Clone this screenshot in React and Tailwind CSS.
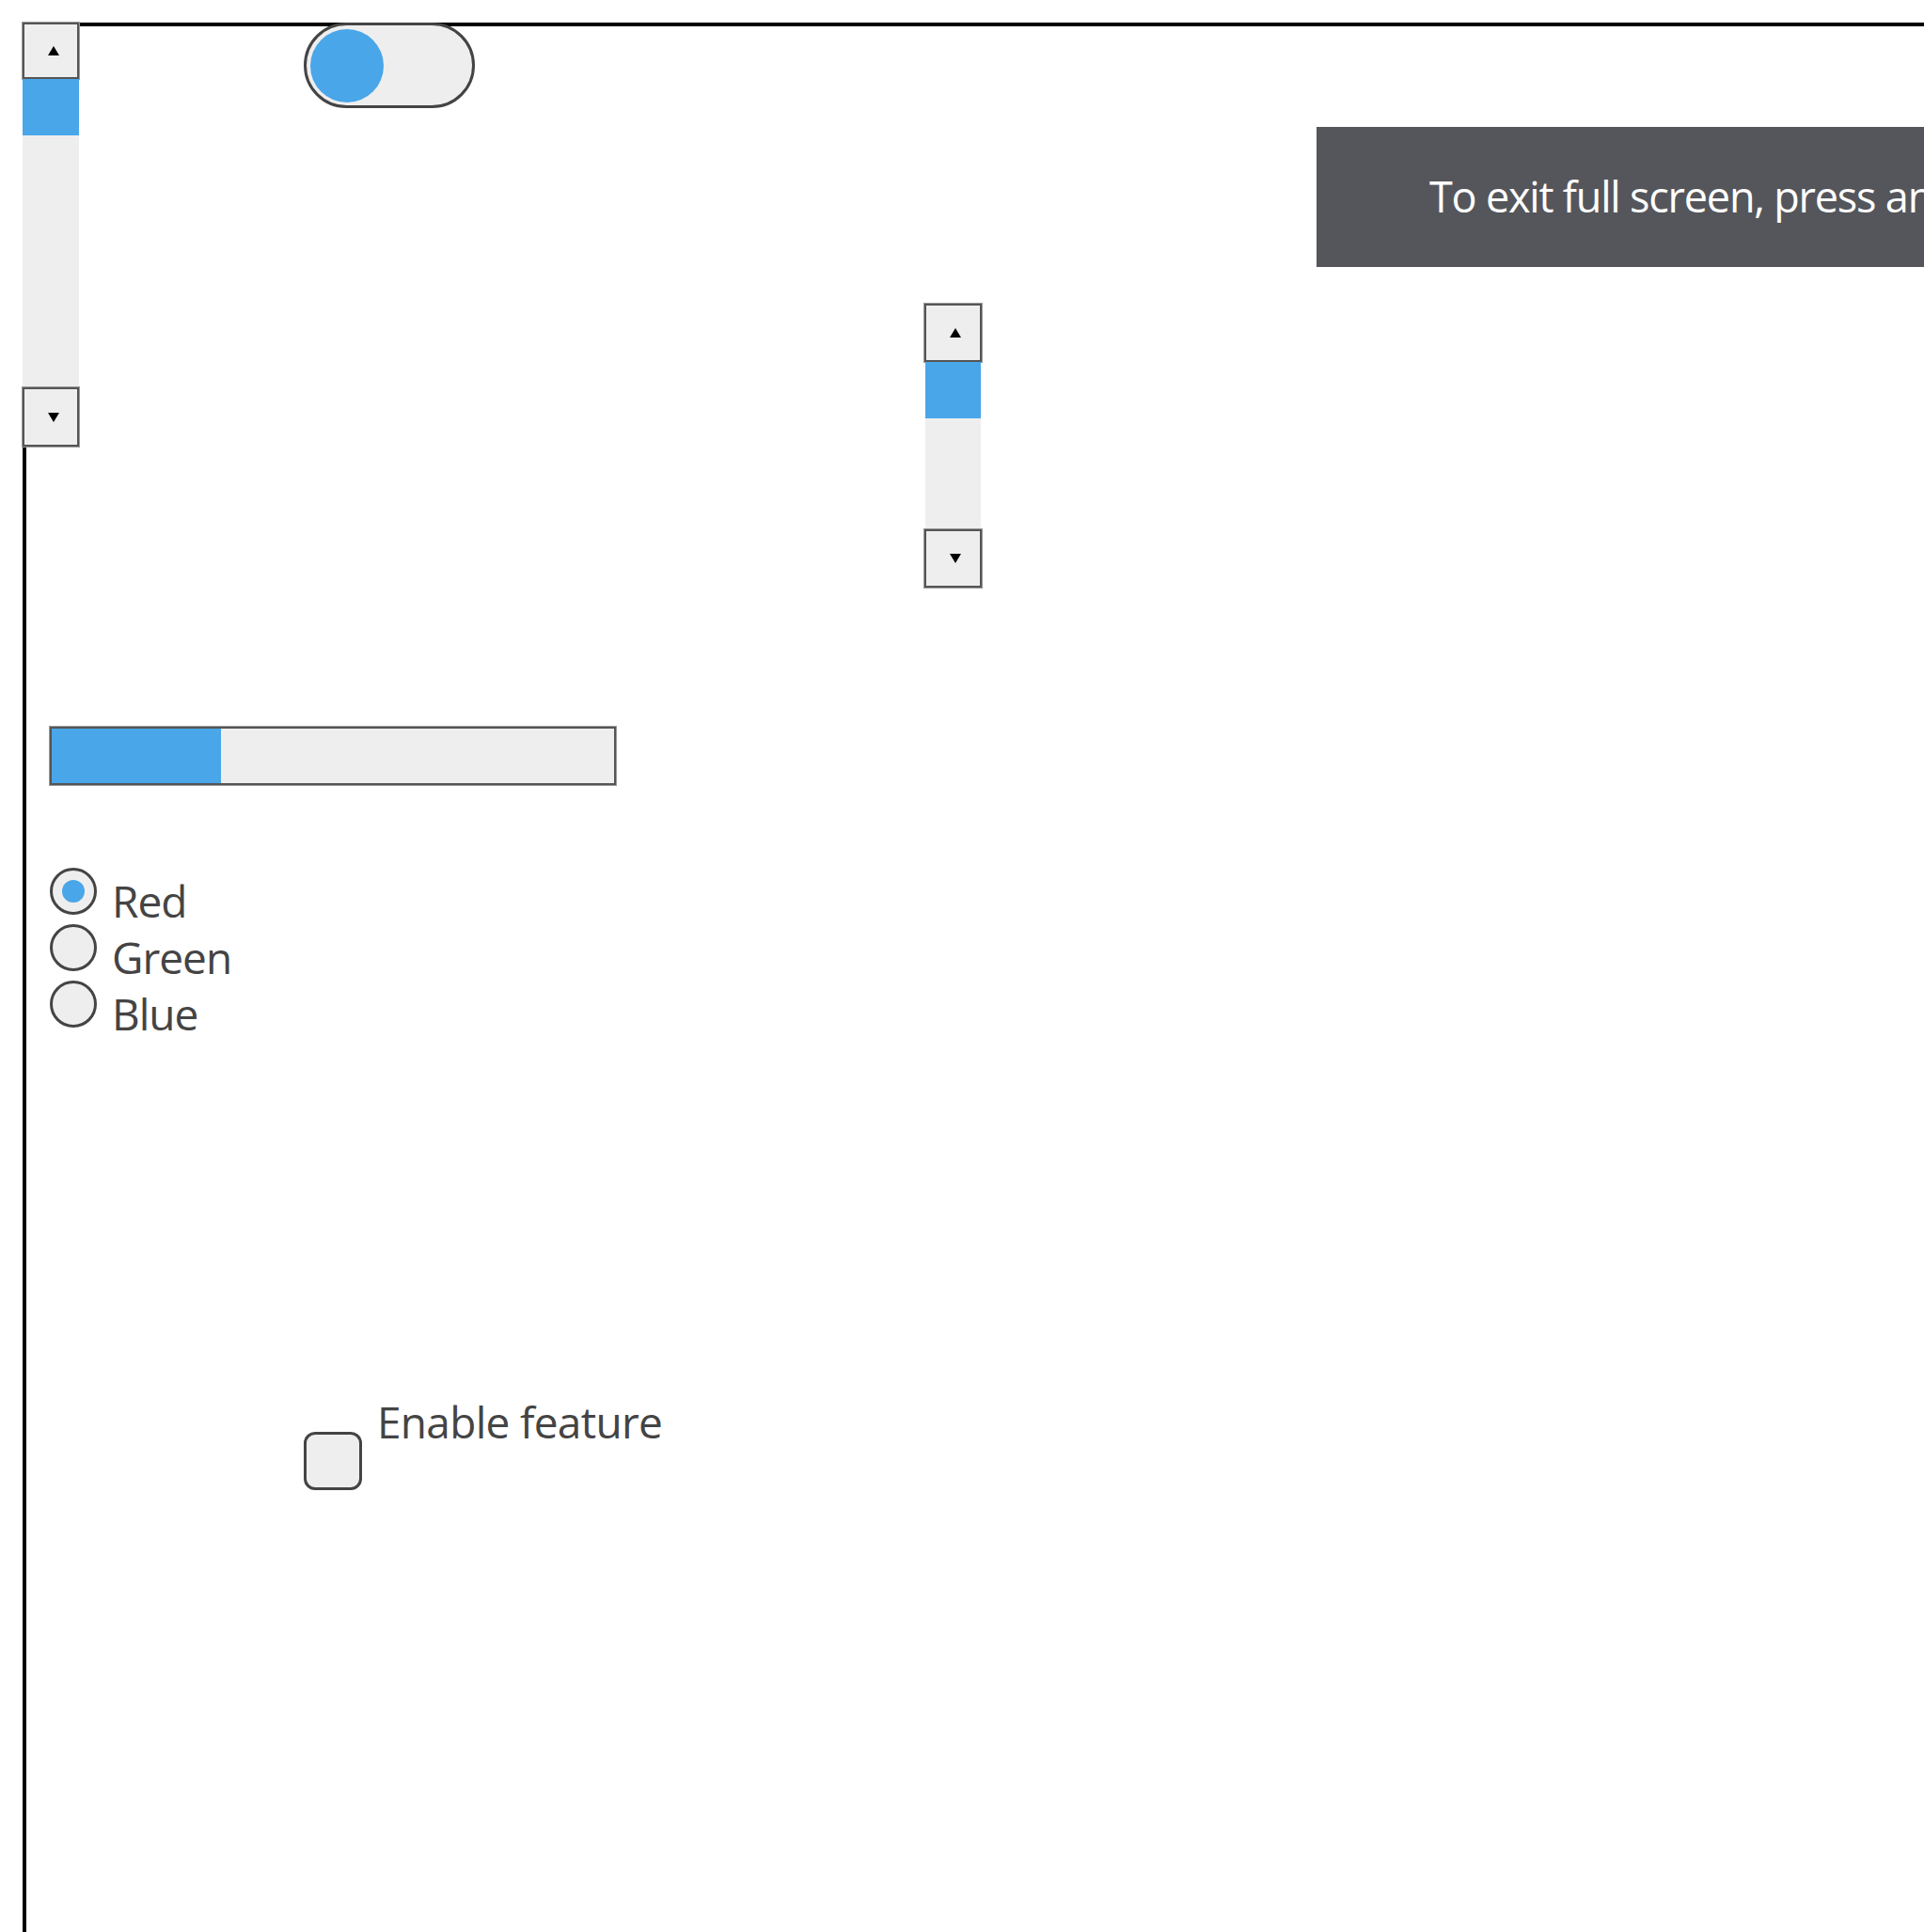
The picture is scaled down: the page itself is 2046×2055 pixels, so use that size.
import React from "react";

const font = { fontFamily: '"Open Sans", "Noto Sans", sans-serif' };

function Arrow({ dir }) {
  return (
    <svg width="12" height="10" viewBox="0 0 12 10" className="ml-[5px]">
      {dir === "up" ? (
        <polygon points="6,0 12,10 0,10" fill="#000" />
      ) : (
        <polygon points="0,0 12,0 6,10" fill="#000" />
      )}
    </svg>
  );
}

function ScrollButton({ dir, h }) {
  return (
    <div
      className="flex items-center justify-center border-2 border-[#555] bg-[#eeeeee] shadow-[0_0_0_1px_#999]"
      style={{ height: h }}
    >
      <Arrow dir={dir} />
    </div>
  );
}

export default function App() {
  return (
    <div
      className="relative w-[2046px] h-[2055px] overflow-hidden bg-white text-[#444]"
      style={font}
    >
      {/* canvas frame */}
      <div className="absolute left-[24px] top-[24px] w-[2200px] h-[2200px] border-t-4 border-l-4 border-black" />

      {/* vertical scrollbar 1 */}
      <div className="absolute left-[24px] top-[24px] w-[60px] h-[451px] flex flex-col">
        <ScrollButton dir="up" h={60} />
        <div className="h-[60px] bg-[#49a6e9]" />
        <div className="flex-1 bg-[#eeeeee]" />
        <ScrollButton dir="down" h={63} />
      </div>

      {/* toggle */}
      <div className="absolute left-[323px] top-[24px] w-[182px] h-[91px] rounded-full border-[3px] border-[#444] bg-[#eeeeee] flex items-center pl-[4px]">
        <div className="w-[78px] h-[78px] rounded-full bg-[#49a6e9]" />
      </div>

      {/* fullscreen notice */}
      <div className="absolute left-[1400px] top-[135px] w-[646px] h-[149px] bg-[#55565b] flex items-center pl-[120px] overflow-hidden">
        <span className="text-white text-[45px] leading-none whitespace-nowrap tracking-[-1.2px] -mt-[2px]">
          To exit full screen, press and hold Esc
        </span>
      </div>

      {/* vertical scrollbar 2 */}
      <div className="absolute left-[983px] top-[323px] w-[61px] h-[302px] flex flex-col">
        <ScrollButton dir="up" h={62} />
        <div className="h-[60px] bg-[#49a6e9] mx-[1px]" />
        <div className="flex-1 bg-[#eeeeee] mx-[1px]" />
        <ScrollButton dir="down" h={62} />
      </div>

      {/* progress bar */}
      <div className="absolute left-[53px] top-[773px] w-[602px] h-[62px] border-2 border-[#555] bg-[#eeeeee] shadow-[0_0_0_1px_#999]">
        <div className="h-full w-[180px] bg-[#49a6e9]" />
      </div>

      {/* radios */}
      <div className="absolute left-[53px] top-[923px] flex flex-col">
        {["Red", "Green", "Blue"].map((c, i) => (
          <div key={c} className="h-[60px] flex items-start">
            <div className="w-[50px] h-[50px] rounded-full border-[3px] border-[#444] bg-[#eeeeee] flex items-center justify-center">
              {i === 0 && <div className="w-[24px] h-[24px] rounded-full bg-[#49a6e9]" />}
            </div>
            <span className="ml-[16px] mt-[12px] text-[46px] leading-none tracking-[-1px]">
              {c}
            </span>
          </div>
        ))}
      </div>

      {/* checkbox */}
      <div className="absolute left-[323px] top-[1489px] flex items-start">
        <div className="mt-[34px] w-[62px] h-[62px] rounded-[12px] border-[3px] border-[#444] bg-[#eeeeee]" />
        <span className="ml-[16px] text-[46px] leading-none tracking-[-0.7px]">Enable feature</span>
      </div>
    </div>
  );
}
